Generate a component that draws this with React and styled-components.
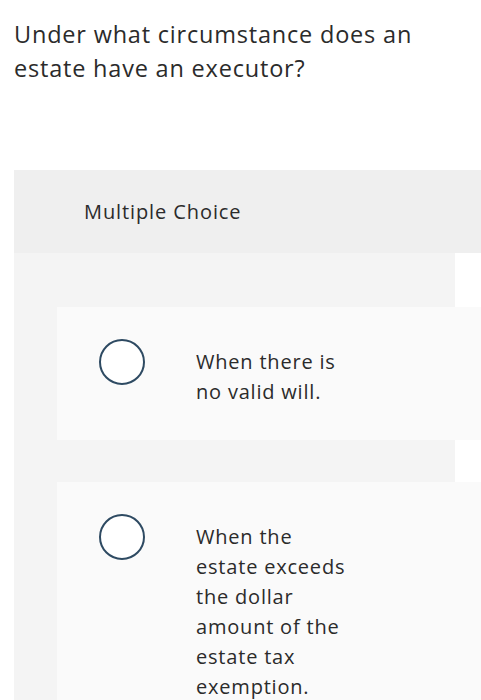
import styled, { createGlobalStyle } from "styled-components";

const Global = createGlobalStyle`
  html, body {
    margin: 0;
    padding: 0;
    background: #ffffff;
    overflow: hidden;
  }
  body {
    font-family: "Open Sans", "Liberation Sans", sans-serif;
    color: #2b2b2b;
  }
`;

const options = [
  { id: "a", text: "When there is no valid will." },
  {
    id: "b",
    text: "When the estate exceeds the dollar amount of the estate tax exemption.",
  },
];

const App = () => {
  return (
    <>
      <Global />
      <Page>
        <Question>Under what circumstance does an estate have an executor?</Question>
        <Panel>
          <Header>Multiple Choice</Header>
          <Body>
            {options.map((o) => (
              <Option key={o.id}>
                <Radio />
                <Label>{o.text}</Label>
              </Option>
            ))}
          </Body>
        </Panel>
      </Page>
    </>
  );
};

const Page = styled.div`
  padding-left: 14px;
  width: 467px;
`;

const Question = styled.h1`
  margin: 17px 0 0;
  max-width: 430px;
  font-size: 23.5px;
  font-weight: 400;
  letter-spacing: 0.8px;
  line-height: 34px;
  color: #2b2b2b;
`;

const Panel = styled.div`
  margin-top: 85px;
`;

const Header = styled.div`
  display: flex;
  align-items: center;
  height: 83px;
  padding-left: 70px;
  background: #efefef;
  font-size: 20px;
  letter-spacing: 0.9px;
  color: #2b2b2b;
`;

const Body = styled.div`
  display: flex;
  flex-direction: column;
  gap: 42px;
  width: 441px;
  padding: 54px 0 40px 43px;
  box-sizing: border-box;
  background: #f4f4f4;
`;

const Option = styled.div`
  display: flex;
  align-items: flex-start;
  width: 440px;
  padding: 32px 0 33px 42px;
  box-sizing: border-box;
  background: #fafafa;
`;

const Radio = styled.span`
  flex: none;
  width: 46px;
  height: 46px;
  border: 2px solid #2e4a62;
  border-radius: 50%;
  box-sizing: border-box;
  background: #ffffff;
`;

const Label = styled.p`
  margin: 8px 0 0 51px;
  width: 160px;
  font-size: 20px;
  letter-spacing: 0.8px;
  line-height: 30px;
  color: #2b2b2b;
`;

export default App;
